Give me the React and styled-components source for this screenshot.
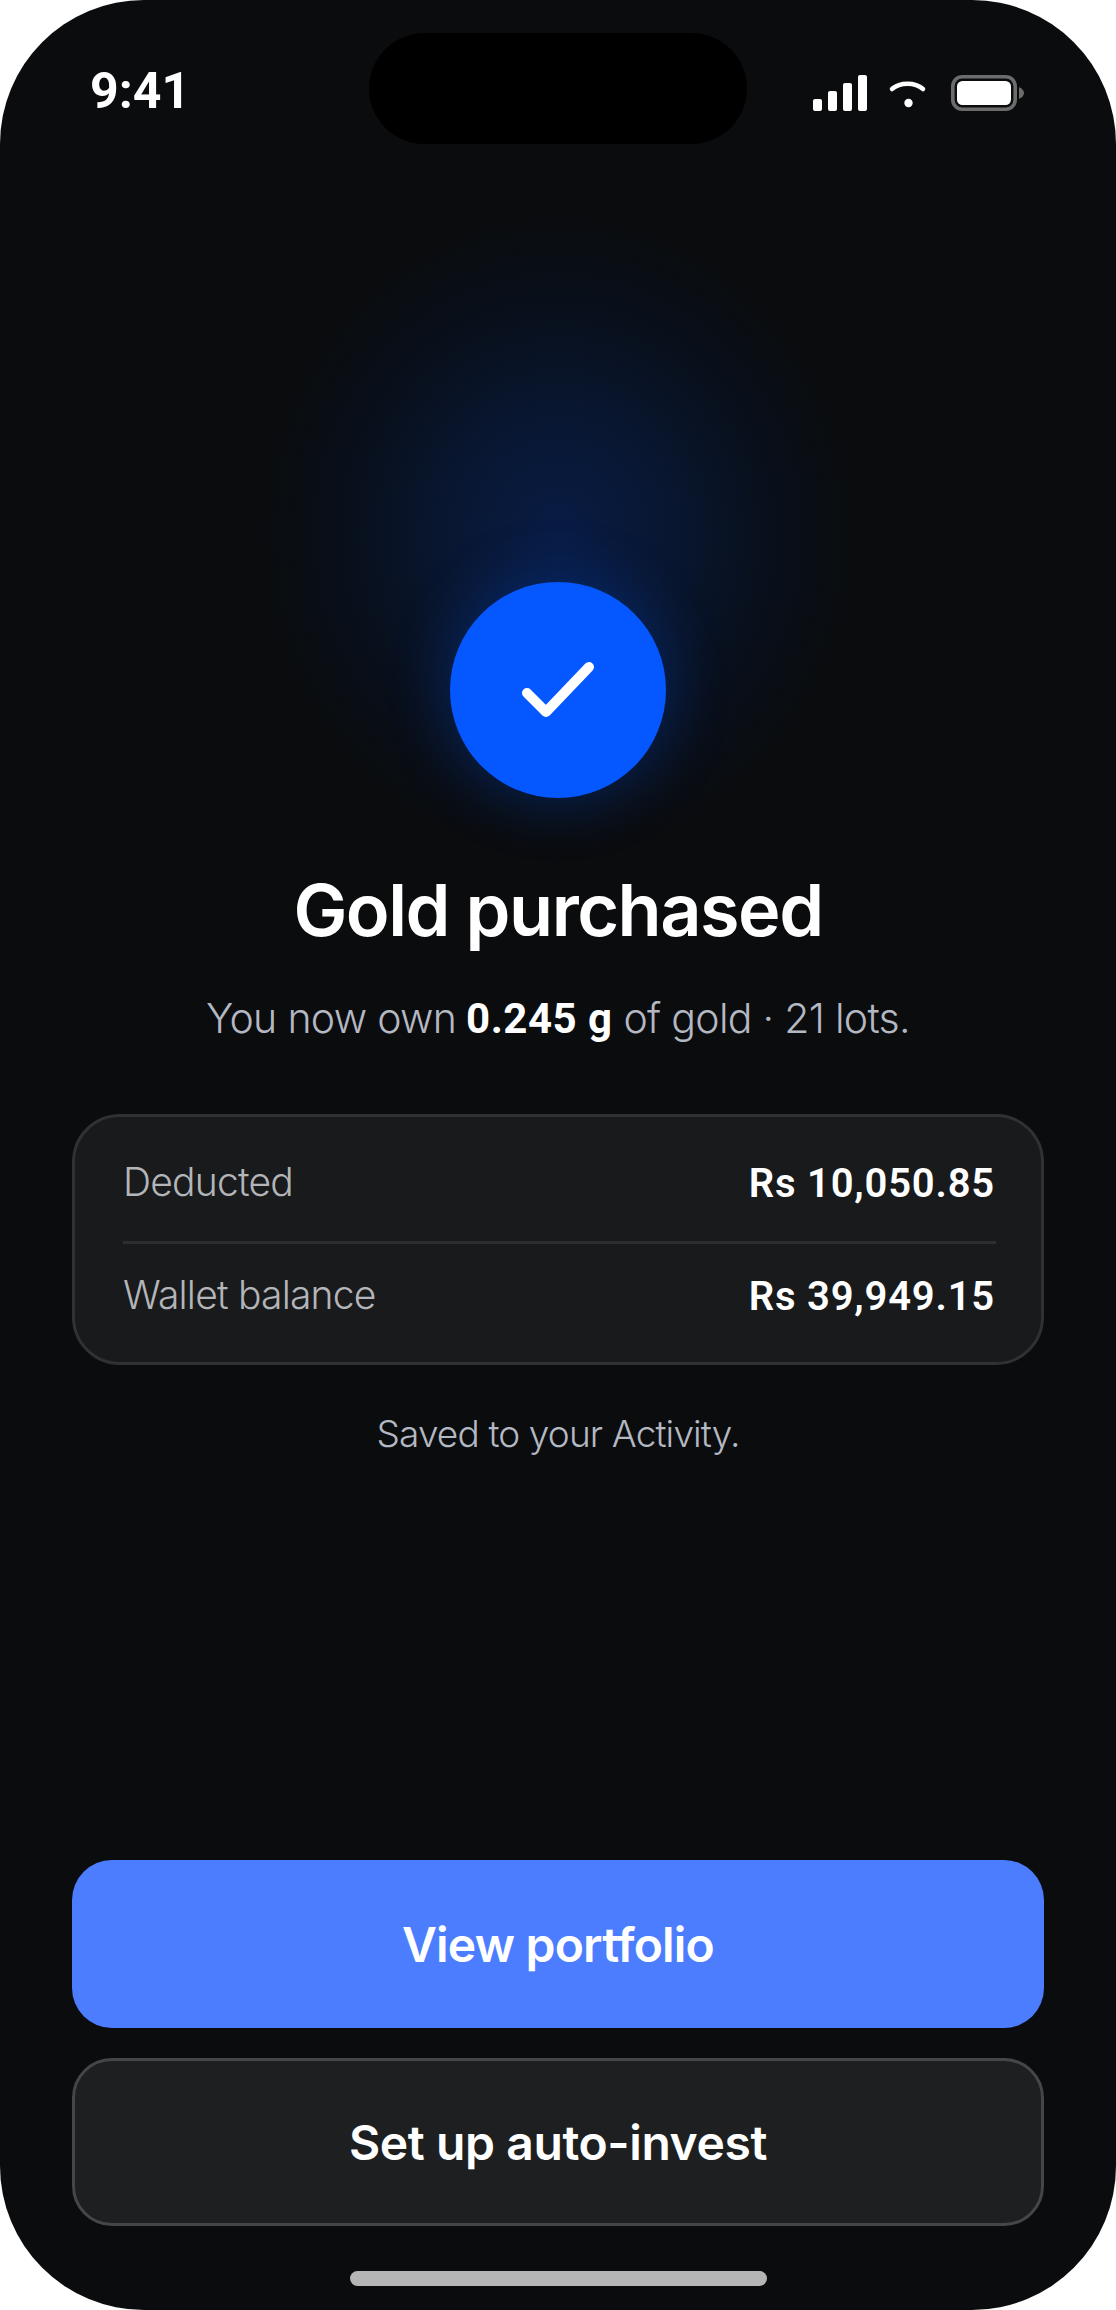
import React from "react"
import styled, { createGlobalStyle } from "styled-components"

const GlobalStyle = createGlobalStyle`
  html, body {
    margin: 0;
    padding: 0;
    background: #fff;
  }
`

const Phone = styled.div`
  position: relative;
  width: 1116px;
  height: 2310px;
  box-sizing: border-box;
  padding: 0 72px;
  display: flex;
  flex-direction: column;
  overflow: hidden;
  border-radius: 144px;
  background: #0a0c0e;
  font-family: Inter, "Liberation Sans", sans-serif;
  color: #fff;
`

const Glow = styled.div`
  position: absolute;
  left: 258px;
  top: 214px;
  width: 600px;
  height: 640px;
  background: radial-gradient(
    ellipse 50% 50% at 50% 50%,
    rgba(8, 30, 76, 0.88) 0%,
    rgba(8, 27, 64, 0.72) 35%,
    rgba(7, 20, 44, 0.46) 70%,
    rgba(7, 16, 30, 0) 100%
  );
`

const Island = styled.div`
  position: absolute;
  left: 369px;
  top: 33px;
  width: 378px;
  height: 111px;
  border-radius: 56px;
  background: #000;
`

const StatusBar = styled.div`
  position: relative;
  height: 48px;
  padding: 67px 20px 0 18px;
  display: flex;
  justify-content: space-between;
  align-items: flex-start;
`

const Time = styled.span`
  font-family: Roboto, sans-serif;
  font-weight: 700;
  font-size: 50px;
  line-height: 48px;
`

const StatusIcons = styled.svg`
  display: block;
  margin-top: 8px;
`

const Hero = styled.div`
  position: relative;
  display: flex;
  flex-direction: column;
  align-items: center;
  margin-top: 467px;
`

const CheckCircle = styled.div`
  width: 216px;
  height: 216px;
  border-radius: 50%;
  background: #0558ff;
  box-shadow: 0 0 60px 4px rgba(5, 80, 230, 0.3);
  display: flex;
  align-items: center;
  justify-content: center;
`

const Title = styled.h1`
  margin: 68px 0 0;
  font-size: 72px;
  line-height: 88px;
  font-weight: 600;
  letter-spacing: -1.5px;
`

const Subtitle = styled.p`
  margin: 36px 0 0;
  font-size: 41px;
  line-height: 56px;
  font-weight: 300;
  letter-spacing: -0.7px;
  color: #b4b8c2;
  b {
    margin-left: -1px;
    font-family: Roboto, sans-serif;
    font-size: 42px;
    font-weight: 700;
    letter-spacing: 0.5px;
    color: #fff;
  }
`

const SummaryCard = styled.div`
  margin-top: 67px;
  height: 251px;
  box-sizing: border-box;
  padding: 41px 45px 43px 48px;
  border: 3px solid #2f3134;
  border-radius: 48px;
  background: #191a1c;
`

const SummaryRow = styled.div`
  height: 48px;
  display: flex;
  justify-content: space-between;
  align-items: center;
`

const RowDivider = styled.div`
  height: 3px;
  margin: 35px 0 27px;
  background: #2c2e32;
`

const RowLabel = styled.span`
  padding-bottom: 2px;
  font-size: 39px;
  font-weight: 300;
  letter-spacing: -0.8px;
  color: #b3b5b9;
`

const RowValue = styled.span`
  padding-top: 3px;
  margin-right: 1px;
  font-family: Roboto, sans-serif;
  font-size: 40px;
  font-weight: 600;
  letter-spacing: 0.8px;
`

const Note = styled.p`
  margin: 45px 0 0;
  text-align: center;
  font-size: 37px;
  line-height: 48px;
  font-weight: 300;
  letter-spacing: -0.87px;
  color: #b4b8c2;
`

const Actions = styled.div`
  margin-top: auto;
  display: flex;
  flex-direction: column;
  gap: 30px;
`

const ActionButton = styled.button`
  height: 168px;
  box-sizing: border-box;
  padding: 0;
  border: ${(p) => (p.$primary ? "0" : "3px solid #454648")};
  border-radius: 40px;
  background: ${(p) => (p.$primary ? "#4c7dff" : "#1e1f21")};
  color: #fff;
  font-family: Inter, sans-serif;
  font-size: 48px;
  font-weight: 600;
  letter-spacing: ${(p) => (p.$primary ? "-0.8px" : "-0.4px")};
`

const HomeBar = styled.div`
  align-self: center;
  width: 417px;
  height: 15px;
  border-radius: 8px;
  margin: 45px 0 24px;
  background: #b5b5b5;
`

const SignalWifiBattery = () => (
  <StatusIcons width="211" height="36" viewBox="0 0 211 36" fill="none">
    <rect x="0" y="24" width="9" height="12" rx="2" fill="#fff" />
    <rect x="15" y="16" width="9" height="20" rx="2" fill="#fff" />
    <rect x="30" y="8" width="9" height="28" rx="2" fill="#fff" />
    <rect x="45" y="0" width="9" height="36" rx="2" fill="#fff" />
    <path d="M79 14 C87 7 102 7 110 14" stroke="#fff" strokeWidth="4.5" strokeLinecap="round" />
    <circle cx="95.5" cy="28" r="4.2" fill="#fff" />
    <rect x="139.8" y="1.8" width="62.4" height="32.4" rx="9.5" stroke="#6c6c6c" strokeWidth="3.6" />
    <rect x="144" y="6" width="54" height="24" rx="5.5" fill="#fff" />
    <path d="M206 12 C209 13.5 211 15.5 211 18 C211 20.5 209 22.5 206 24 Z" fill="#6c6c6c" />
  </StatusIcons>
)

const App = () => (
  <>
    <GlobalStyle />
    <Phone>
      <Glow />
      <Island />
      <StatusBar>
        <Time>9:41</Time>
        <SignalWifiBattery />
      </StatusBar>
      <Hero>
        <CheckCircle>
          <svg width="76" height="60" viewBox="0 0 76 60" fill="none">
            <path d="M7 33 L26 52 L69 7" stroke="#fff" strokeWidth="10" strokeLinecap="round" strokeLinejoin="round" />
          </svg>
        </CheckCircle>
        <Title>Gold purchased</Title>
        <Subtitle>
          You now own <b>0.245 g</b> of gold · 21 lots.
        </Subtitle>
      </Hero>
      <SummaryCard>
        <SummaryRow>
          <RowLabel>Deducted</RowLabel>
          <RowValue>Rs 10,050.85</RowValue>
        </SummaryRow>
        <RowDivider />
        <SummaryRow>
          <RowLabel>Wallet balance</RowLabel>
          <RowValue>Rs 39,949.15</RowValue>
        </SummaryRow>
      </SummaryCard>
      <Note>Saved to your Activity.</Note>
      <Actions>
        <ActionButton $primary>View portfolio</ActionButton>
        <ActionButton>Set up auto-invest</ActionButton>
      </Actions>
      <HomeBar />
    </Phone>
  </>
)

export default App
